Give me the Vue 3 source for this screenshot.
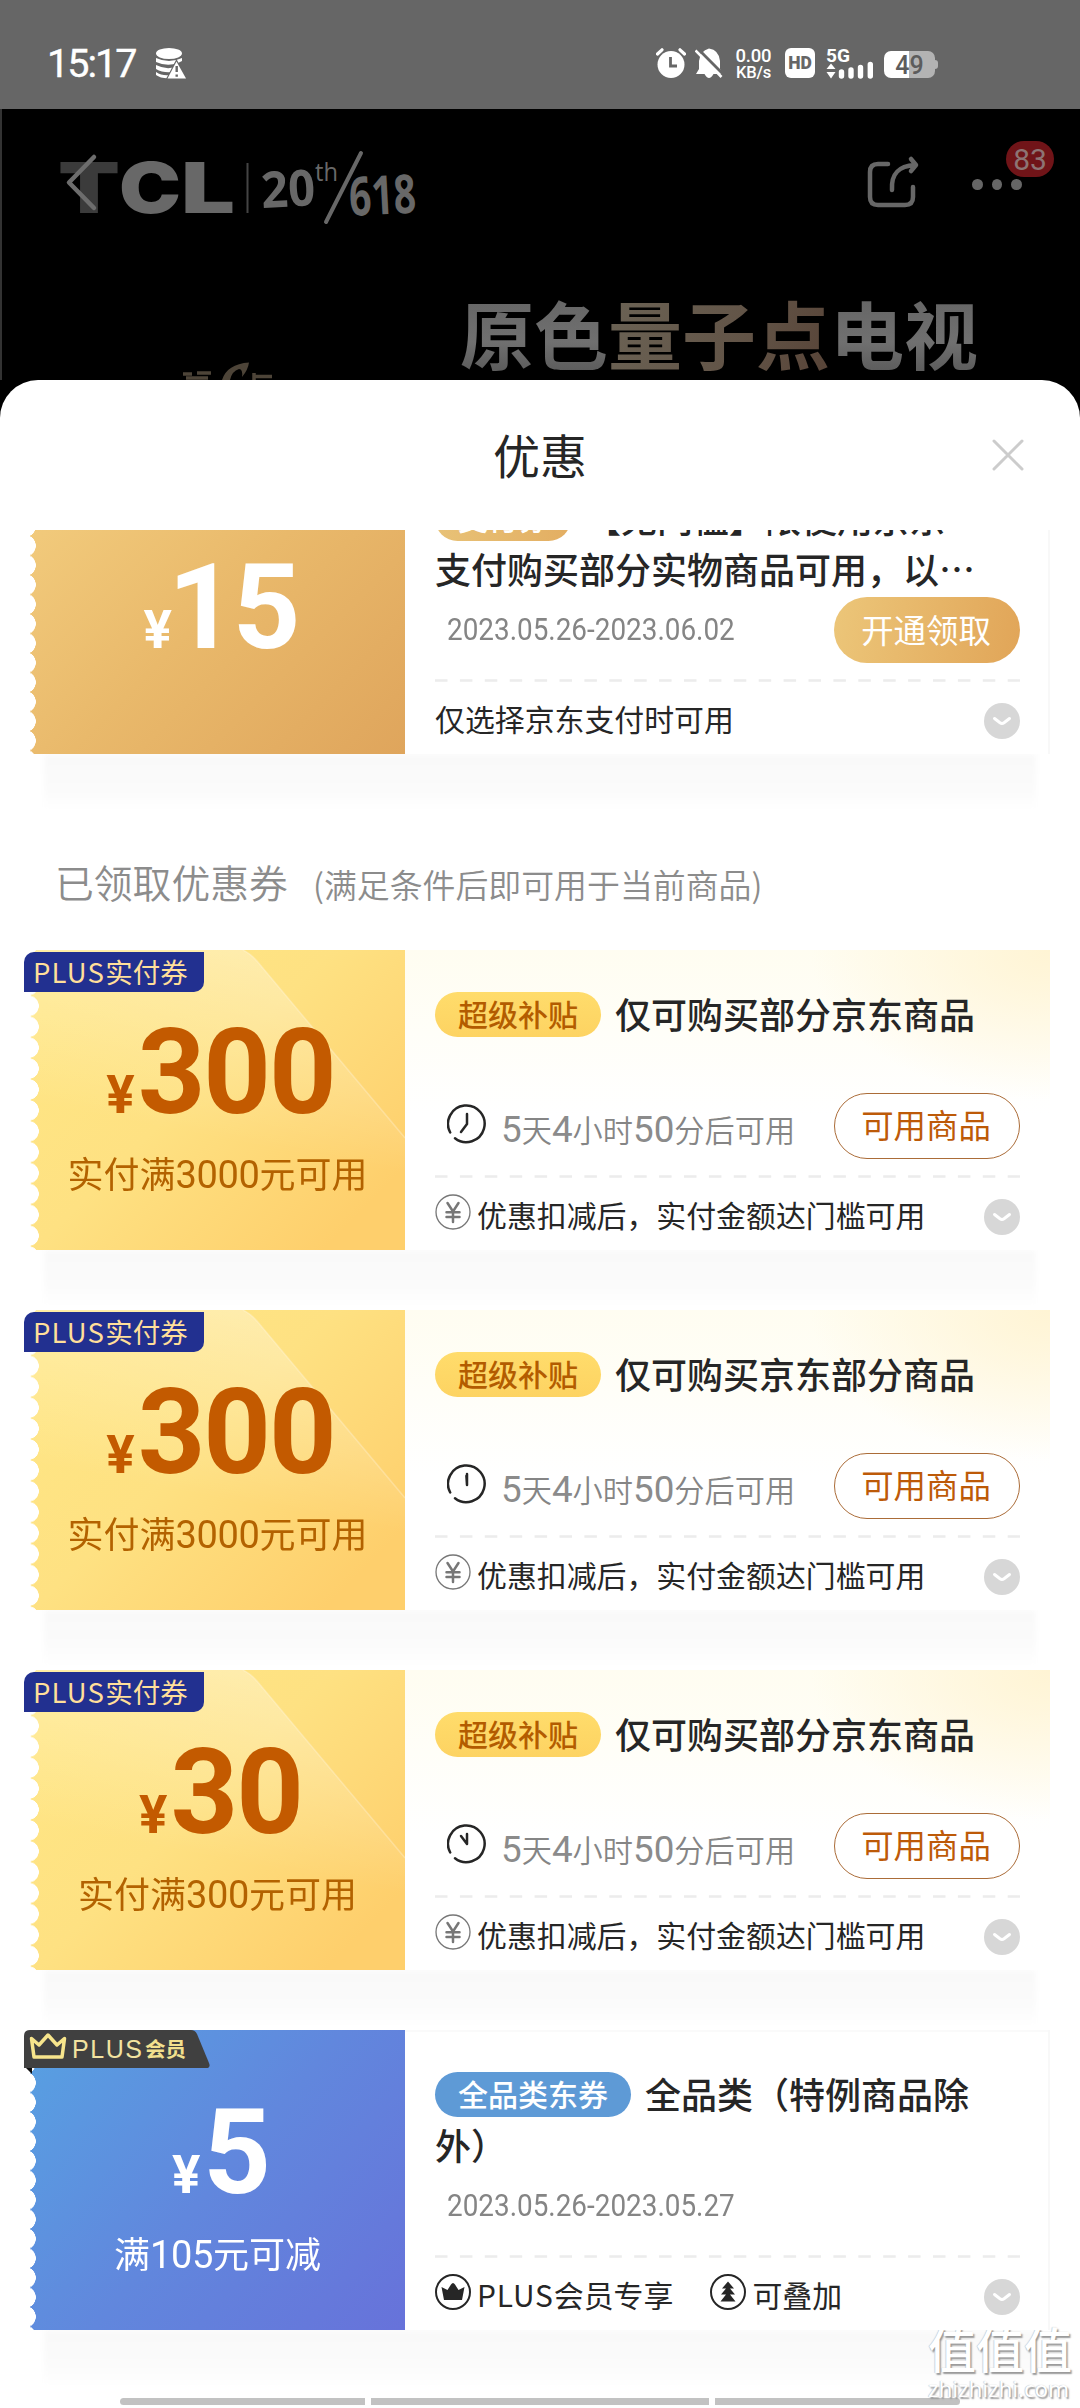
<script setup>
const coupons = [
  {
    theme: 'gold', amount: '15', condition: '', tag: '支付券',
    title: '【无门槛】限使用京东支付购买部分实物商品可用，以…',
    date: '2023.05.26-2023.06.02', button: '开通领取',
    notes: [{ icon: '', text: '仅选择京东支付时可用' }],
  },
  {
    theme: 'plus', amount: '300', condition: '实付满3000元可用', tag: '超级补贴', ribbon: 'PLUS实付券',
    title: '仅可购买部分京东商品', wait: '5天4小时50分后可用', hands: 'M20 10V20L14 28', button: '可用商品',
    notes: [{ icon: 'yen', text: '优惠扣减后，实付金额达门槛可用' }],
  },
  {
    theme: 'plus', amount: '300', condition: '实付满3000元可用', tag: '超级补贴', ribbon: 'PLUS实付券',
    title: '仅可购买京东部分商品', wait: '5天4小时50分后可用', hands: 'M20 10V21L19.4 12', button: '可用商品',
    notes: [{ icon: 'yen', text: '优惠扣减后，实付金额达门槛可用' }],
  },
  {
    theme: 'plus', amount: '30', condition: '实付满300元可用', tag: '超级补贴', ribbon: 'PLUS实付券',
    title: '仅可购买部分京东商品', wait: '5天4小时50分后可用', hands: 'M20 10V20L14 12', button: '可用商品',
    notes: [{ icon: 'yen', text: '优惠扣减后，实付金额达门槛可用' }],
  },
  {
    theme: 'blue', amount: '5', condition: '满105元可减', tag: '全品类东券', member: true,
    title: '全品类（特例商品除外）',
    date: '2023.05.26-2023.05.27', button: '',
    notes: [{ icon: 'crown', text: 'PLUS会员专享' }, { icon: 'stack', text: '可叠加' }],
  },
]
const parts = (text) => text.split(/(\d+|[A-Z]+)/).filter(Boolean).map((t) => ({ t, cls: /^\d/.test(t) ? 'num' : /^[A-Z]/.test(t) ? 'latin' : '' }))
const claimed = coupons.slice(1)
const groups = [{ list: coupons.slice(0, 1), heading: false }, { list: claimed, heading: true }]
</script>

<template>
  <div class="screen">
    <header class="status">
      <span class="time">15:17</span>
      <svg class="db" width="30" height="31" viewBox="0 0 30 31">
        <ellipse cx="13" cy="5.5" rx="13" ry="5.5" fill="#fff" />
        <path d="M0 10q13 6 26 0v3l-4 2q-11 4-22-1zM0 17q10 5 19 2l-3 5q-9 1-16-3zM0 24q6 4 14 3l-2 3.500Q4 30 0 27z" fill="#fff" />
        <path d="M20.500 11 31 31H10z" fill="#666" />
        <path d="M20.500 13.500 30 30.500H11.500z" fill="#fff" />
        <path d="M20.700 18v6M20.700 26.500v2.200" stroke="#666" stroke-width="2.400" />
      </svg>
      <svg class="alarm" width="30" height="30" viewBox="0 0 30 30">
        <circle cx="15" cy="16.500" r="13.500" fill="#fff" />
        <path d="M1.500 6 6 1.800M28.500 6 24 1.800" stroke="#fff" stroke-width="3.200" stroke-linecap="round" />
        <path d="M14.500 9v9H21" fill="none" stroke="#666" stroke-width="2.800" />
      </svg>
      <svg class="bell" width="28" height="31" viewBox="0 0 28 31">
        <path d="M1 26 4 21V13Q5 3 14 0.500 24 2 25 13V21L27 26H18.500Q14 34 9.500 26z" fill="#fff" />
        <path d="M2 0 29 27" stroke="#666" stroke-width="3" />
        <path d="M0.500 2.500 26.500 29" stroke="#fff" stroke-width="2.600" />
      </svg>
      <span class="rate"><b>0.00</b><b>KB/s</b></span>
      <span class="hd">HD</span>
      <svg class="signal" width="50" height="31" viewBox="0 0 50 31">
        <text x="0" y="14" textLength="24" lengthAdjust="spacingAndGlyphs" class="fiveg">5G</text>
        <path d="M5 15.500 9.500 21H.5zM.5 24h9L5 30.500z" fill="#fff" />
        <path d="M15.500 24v4M25 22v6M34.500 19.500v8.500M44.300 16.500v11.500" stroke="#fff" stroke-width="5.400" stroke-linecap="round" />
      </svg>
      <span class="battery"><span>49</span></span>
    </header>

    <section class="hero">
      <div class="nav">
        <svg class="logo" width="372" height="90" viewBox="0 0 372 90">
          <g class="tcl">
            <text x="9" y="68" textLength="62" lengthAdjust="spacingAndGlyphs" fill="#3b3b3b">T</text>
            <text x="70" y="68" textLength="62" lengthAdjust="spacingAndGlyphs" fill="#686868">C</text>
            <text x="132" y="68" textLength="54" lengthAdjust="spacingAndGlyphs" fill="#686868">L</text>
          </g>
          <path d="M198.500 18v50" stroke="#444" stroke-width="2" />
          <g fill="#686868" class="anniv">
            <text x="213" y="63" font-size="50" textLength="54" lengthAdjust="spacingAndGlyphs" transform="rotate(-3 213 63)">20</text>
            <text x="266" y="36" font-size="25" textLength="23" lengthAdjust="spacingAndGlyphs" class="th">th</text>
            <text x="301" y="71" font-size="54" textLength="67" lengthAdjust="spacingAndGlyphs" transform="rotate(-3 301 71)">618</text>
          </g>
          <path d="M312 8 277 77" stroke="#686868" stroke-width="4" stroke-linecap="round" />
          <path d="M45 12 20 37.500 45 63" fill="none" stroke="#6d6d6d" stroke-width="4.500" stroke-linecap="round" stroke-linejoin="round" />
        </svg>
        <svg class="share" width="54" height="54" viewBox="0 0 54 54">
          <g fill="none" stroke="#676767" stroke-width="4.500" stroke-linecap="round" stroke-linejoin="round">
            <path d="M22 9H12Q4 9 4 17V42Q4 50 12 50H39Q47 50 47 42V32" />
            <path d="M26 35C25 18 33 11 49 10M45 4 50 10 45 16" />
          </g>
        </svg>
        <div class="more"><i /><i /><i /><span>83</span></div>
      </div>
      <h1><b>原色</b><b class="bronze">量子点</b><b>电视</b></h1>
      <svg class="crest" width="96" height="20" viewBox="0 0 96 20">
        <path d="M1 14h9M15 13h14M4 18h22M72 13v7M72 16.500h18" fill="none" stroke="#4d4438" stroke-width="3.500" />
        <path d="M40 20Q45 4 67 2.500 66 10 60 17 61 9 57 9 50 11 48 20z" fill="#4d4438" />
      </svg>
    </section>

    <main class="sheet">
      <div class="sheet-head">
        <h2>优惠</h2>
        <svg class="close" width="32" height="32" viewBox="0 0 32 32">
          <path d="M2 2 30 30M30 2 2 30" stroke="#ccc" stroke-width="3" stroke-linecap="round" />
        </svg>
      </div>
      <div class="scroll">
        <div class="scroll-inner">
          <template v-for="(g, gi) in groups" :key="gi">
            <div v-if="g.heading" class="heading"><span>已领取优惠券</span><small>(满足条件后即可用于当前商品)</small></div>
            <article v-for="(c, i) in g.list" :key="i" class="card" :class="c.theme">
              <div class="face">
                <svg v-if="c.theme === 'plus'" class="facet" width="375" height="300" viewBox="0 0 375 300">
                  <defs>
                    <linearGradient id="sheen" x1="0.600" y1="0" x2="0.300" y2="1">
                      <stop offset="0" stop-color="#fff" stop-opacity=".34" />
                      <stop offset=".75" stop-color="#fff" stop-opacity="0" />
                    </linearGradient>
                  </defs>
                  <path d="M0 0H213Q222 4 232 17L375 188V240L0 200z" fill="url(#sheen)" />
                  <path d="M213 0Q222 4 232 17L375 188" fill="none" stroke="#fff" stroke-opacity=".25" stroke-width="1.500" />
                </svg>
                <div class="price"><span class="yen">¥</span><span>{{ c.amount }}</span></div>
                <div v-if="c.condition" class="cond">
                  <span v-for="(p, k) in parts(c.condition)" :key="k" :class="p.cls">{{ p.t }}</span>
                </div>
              </div>
              <div class="body">
                <div class="title"><span class="tag">{{ c.tag }}</span>{{ c.title }}</div>
                <div class="row">
                  <span v-if="c.date" class="date">{{ c.date }}</span>
                  <span v-else class="wait">
                    <svg width="40" height="40" viewBox="0 0 40 40">
                      <g fill="none" stroke="#262626" stroke-width="2.500" stroke-linecap="round" stroke-linejoin="round">
                        <path d="M3.200 28.500A18.300 18.300 0 1 1 8 34.200" />
                        <path :d="c.hands" />
                      </g>
                    </svg>
                    <span class="wait-text"><span v-for="(p, k) in parts(c.wait)" :key="k" :class="p.cls">{{ p.t }}</span></span>
                  </span>
                  <span v-if="c.button" class="btn">{{ c.button }}</span>
                </div>
                <svg class="dash" width="585" height="3" viewBox="0 0 585 3">
                  <path d="M0 1.500H585" stroke="#ececec" stroke-width="2.500" stroke-dasharray="12.500 12.400" />
                </svg>
                <div class="foot">
                  <span v-for="n in c.notes" :key="n.text" class="note">
                    <svg v-if="n.icon" width="36" height="36" viewBox="0 0 36 36">
                      <circle cx="18" cy="18" r="17" fill="none" :stroke="n.icon === 'yen' ? '#777' : '#262626'" :stroke-width="n.icon === 'yen' ? 1.3 : 2" />
                      <path v-if="n.icon === 'yen'" d="M12.500 9 18 17.500 23.500 9M18 17.500V28M11.500 18.300h13M11.500 23h13" fill="none" stroke="#777" stroke-width="2.500" stroke-linecap="round" />
                      <path v-else-if="n.icon === 'crown'" d="M6.500 13 12.500 16 16 10.500Q18 7.500 20 10.500L23.500 16 29.500 13 27 26H9z" fill="#262626" />
                      <path v-else d="M18 7.500 24 14.500H20L25 20.500H20L25.500 27.500H10.500L16 20.500H11L16 14.500H12z" fill="#262626" />
                    </svg>
                    <span class="note-text"><span v-for="(p, k) in parts(n.text)" :key="k" :class="p.cls">{{ p.t }}</span></span>
                  </span>
                  <svg class="expand" width="36" height="36" viewBox="0 0 36 36">
                    <circle cx="18" cy="18" r="18" fill="#d7d7d7" />
                    <path d="M10.500 15.500 16 19.800Q18 21.200 20 19.800L25.500 15.500" fill="none" stroke="#fff" stroke-width="3" stroke-linecap="round" />
                  </svg>
                </div>
              </div>
              <span v-if="c.ribbon" class="ribbon"><span v-for="(p, k) in parts(c.ribbon)" :key="k" :class="p.cls">{{ p.t }}</span></span>
              <svg v-if="c.member" class="member" width="188" height="46" viewBox="0 0 188 46">
                <path d="M0 36 8 44V36z" fill="#101010" />
                <path d="M6 0H167Q171 0 173 4L185 33Q187 38 182 38H0V6Q0 0 6 0z" fill="#404040" />
                <path d="M7.500 8.500 15 15 24 5 33 15 40.500 8.500 38 27H10z" fill="none" stroke="#f7e58c" stroke-width="3.500" stroke-linejoin="round" />
                <text x="48" y="28" textLength="70" class="mp">PLUS</text>
                <text x="121" y="27" textLength="41" class="mc">会员</text>
              </svg>
            </article>
          </template>
        </div>
      </div>
      <div class="home"><i /><i /><i /></div>
      <div class="mark"><b>值值值</b><span>zhizhizhi.com</span></div>
    </main>
  </div>
</template>

<style>
body { background: #000; }
</style>

<style scoped>
.screen {
  width: 1080px; height: 2408px; display: flex; flex-direction: column; overflow: hidden; background: #000;
  font-family: Roboto, "Noto Sans CJK SC", sans-serif; color: #262626;
}
.status { flex: none; height: 61px; padding: 48px 0 0 47px; background: #666; display: flex; align-items: flex-start; color: #fff; }
.time { width: 109px; font: 400 39.500px/32px Roboto, sans-serif; letter-spacing: -2px; -webkit-text-stroke: .4px #fff; }
.alarm { margin-left: 470px; }
.bell { margin-left: 9px; }
.rate { width: 37px; margin-left: 12px; display: flex; flex-direction: column; align-items: center; }
.rate b { font: 500 18.500px/16px Roboto, sans-serif; letter-spacing: -.2px; }
.rate b + b { font-size: 16.500px; line-height: 18px; }
.hd { width: 30px; height: 30px; margin-left: 13px; border-radius: 6px; background: #fff; color: #666; font: 900 17.500px/31px Roboto, sans-serif; text-align: center; }
.signal { margin-left: 11px; }
.fiveg { font: 700 19px Roboto, sans-serif; fill: #fff; }
.battery { position: relative; width: 51px; height: 27px; margin: 3px 0 0 8px; border-radius: 7px; background: linear-gradient(90deg, #fff 25px, #b3b3b3 25px); text-align: center; color: #5c5c5c; font: 500 25px/29px Roboto, sans-serif; }
.battery::after { content: ""; position: absolute; left: 51px; top: 9px; width: 3px; height: 9px; border-radius: 0 3px 3px 0; background: #b3b3b3; }

.hero { position: relative; flex: none; height: 271px; background: #000; border-left: 2px solid #333; box-sizing: border-box; }
.nav { display: flex; align-items: flex-start; padding: 36px 0 0 47px; height: 108px; }
.share { margin-left: 445px; margin-top: 10px; }
.more { position: relative; display: flex; gap: 9px; margin: 34px 0 0 52px; }
.more i { width: 10.500px; height: 11px; border-radius: 50%; background: #666; }
.more span { position: absolute; left: 34px; top: -38px; width: 48px; height: 36px; border-radius: 18px; background: #701418; color: #8d7474; font: 400 30px/37px Roboto, sans-serif; text-align: center; }
h1 { margin: 29px 0 0 458px; font: 700 74px/100px "Noto Sans CJK SC", sans-serif; display: flex; white-space: nowrap; }
h1 b { font-weight: 700; background: linear-gradient(#626262, #707070 60%, #555); -webkit-background-clip: text; background-clip: text; color: transparent; }
h1 .bronze { background-image: linear-gradient(110deg, #6b6355, #625447 60%, #574337); }
.crest { position: absolute; left: 180px; bottom: 0; }

.sheet { flex: 1; min-height: 0; display: flex; flex-direction: column; position: relative; border-radius: 38px 38px 0 0; background: #fff; overflow: hidden; }
.sheet-head { flex: none; height: 150px; position: relative; }
h2 { margin: 0; text-align: center; font: 400 47px/148px "Noto Sans CJK SC", sans-serif; color: #262626; }
.close { position: absolute; left: 992px; top: 59px; }
.scroll { flex: 1; min-height: 0; overflow: hidden; }
.scroll-inner { margin-top: -76px; padding: 0 30px; }
.heading { height: 136px; display: flex; align-items: baseline; padding-left: 25px; box-sizing: border-box; color: #8c8c8c; white-space: nowrap; line-height: 135px; font-family: "Noto Sans CJK SC", sans-serif; font-weight: 350; }
.heading span { width: 258px; font-size: 38.800px; }
.heading small { font-size: 32.900px; }

.card { position: relative; display: flex; height: 300px; margin-bottom: 60px; }
.card::after { content: ""; position: absolute; z-index: 0; left: 14px; right: 14px; top: 300px; height: 58px; background: linear-gradient(#f9f9f9, #fbfbfb 60%, #fff); filter: blur(2px); clip-path: inset(0 -10px -10px -10px); }
.face { position: relative; z-index: 1; flex: none; width: 375px; height: 300px; display: flex; flex-direction: column; align-items: center; justify-content: center; color: #fff;
  mask: radial-gradient(circle 10.900px at -4.900px 50%, transparent 96%, #000 100%) 0 4px / 100% 19.500px repeat-y; }
.gold .face { background: linear-gradient(135deg, #f4cf80, #e9b96b 50%, #dfa55c); }
.blue .face { background: linear-gradient(130deg, #57a1e2, #6187dd 50%, #6772da); }
.plus .face { background: linear-gradient(135deg, #ffe684 10%, #fee182 45%, #fecf6c 88%); color: #c35a00;
  mask: radial-gradient(circle 10.500px at -1.500px 50%, transparent 96%, #000 100%) 0 3.700px / 100% 20.900px repeat-y; }
.facet { position: absolute; left: 0; top: 0; }
.price { position: relative; display: flex; align-items: baseline; font: 700 118px/138px Roboto, sans-serif; letter-spacing: -2px; padding-left: 6px; }
.yen { font-size: 53px; margin-right: 5px; }
.gold .price { letter-spacing: -3px; margin-top: 29px; }
.gold .yen { margin-right: -1px; }
.cond { position: relative; display: flex; align-items: baseline; font: 400 36px/54px "Noto Sans CJK SC", sans-serif; margin-top: -19px; margin-bottom: 12px; }
.plus .cond { color: #b36200; }
.cond .num { font-family: Roboto, sans-serif; font-size: 38px; letter-spacing: -.4px; }
.plus .price, .blue .price { margin-top: 17px; }

.body { position: relative; z-index: 1; flex: 1; display: flex; flex-direction: column; padding: 39px 30px 0; background: #fff; box-shadow: inset -2px 0 #f8f8f8, inset 0 2px #fafafa; }
.plus .body { background: radial-gradient(ellipse 240px 150px at 100% 0, #fff4d4, #fff8e300 100%), linear-gradient(#fffdf1, #fff 55%); box-shadow: none; }
.title { height: 105px; margin-top: -1px; width: 542px; font: 500 36px/51px "Noto Sans CJK SC", sans-serif; }
.tag { display: inline-block; height: 45px; padding: 0 23px; margin-right: 14px; border-radius: 23px; font: 500 30px/43px "Noto Sans CJK SC", sans-serif; vertical-align: top; margin-top: 4px; color: #fff; background: linear-gradient(90deg, #e8c277, #e3ae62); }
.plus .tag { color: #b35c00; background: linear-gradient(#ffdc6b, #fdd362); }
.blue .tag { background: #5e9ad6; }
.row { height: 66px; display: flex; align-items: center; justify-content: space-between; }
.date { margin-left: 12px; font: 400 31.500px/40px Roboto, sans-serif; color: #858585; transform: scaleX(.885); transform-origin: 0 50%; margin-right: -60px; }
.wait { display: flex; margin-left: 12px; color: #858585; }
.wait svg { margin: -2px 14px 0 0; }
.wait-text { display: flex; align-items: baseline; font: 350 30.200px/42px "Noto Sans CJK SC", sans-serif; margin-top: 2px; height: 38px; }
.wait-text .num { font: 400 36.800px/36px Roboto, sans-serif; color: #8b8b8b; }
.btn { width: 186px; height: 66px; box-sizing: border-box; border-radius: 33px; text-align: center; font: 400 32.400px/63px "Noto Sans CJK SC", sans-serif; color: #fff; background: linear-gradient(100deg, #ecc679, #e1a558); padding-right: 2px; }
.plus .btn { background: #fff; border: 1.500px solid #ab6c38; line-height: 60px; color: #bd5a08; }
.dash { display: block; margin-top: 16px; }
.foot { display: flex; align-items: flex-start; padding-top: 16px; font: 400 29.900px/44px "Noto Sans CJK SC", sans-serif; }
.note { display: flex; margin-right: 37px; }
.note svg { margin-right: 6px; }
.note-text { margin-top: -2px; height: 40px; white-space: nowrap; }
.note-text .latin { letter-spacing: .9px; }
.expand { margin-left: auto; margin-top: 5px; }
.ribbon { position: absolute; z-index: 2; left: -6px; top: 2px; width: 180px; height: 40px; border-radius: 10px 0 10px 0; background: #223090; color: #ffdf9a; font: 400 27.500px/39px "Noto Sans CJK SC", sans-serif; padding-left: 9px; box-sizing: border-box; white-space: nowrap; }
.ribbon .latin { letter-spacing: 1.200px; }
.member { position: absolute; z-index: 2; left: -6px; top: 0; }
.mp { font: 400 25px "Liberation Sans", sans-serif; fill: #f2e3a0; }
.mc { font: 700 20.500px "Noto Sans CJK SC", sans-serif; fill: #f2e08e; }
.tcl { font: 900 70px Inter, sans-serif; }
.anniv { font-family: "Open Sans", "Noto Sans", sans-serif; font-weight: 700; }
.th { font-weight: 400; }

.home { position: absolute; left: 120px; bottom: 3px; display: flex; gap: 6px; }
.home i { width: 245px; height: 7px; background: #c2c2c2; border-radius: 4px 0 0 4px; }
.home i:nth-child(2) { width: 338px; border-radius: 0; }
.home i:nth-child(3) { border-radius: 0 4px 4px 0; }
.mark { position: absolute; left: 928px; top: 1938px; display: flex; flex-direction: column; color: #fff; text-shadow: 1.500px 1.500px 1.500px #999, -.5px -.5px 1px #bbb; white-space: nowrap; }
.mark b { font: 500 48px/58px "Noto Sans CJK SC", sans-serif; }
.mark span { font: 400 22.500px/26px "Noto Sans", sans-serif; letter-spacing: -.1px; }
</style>
